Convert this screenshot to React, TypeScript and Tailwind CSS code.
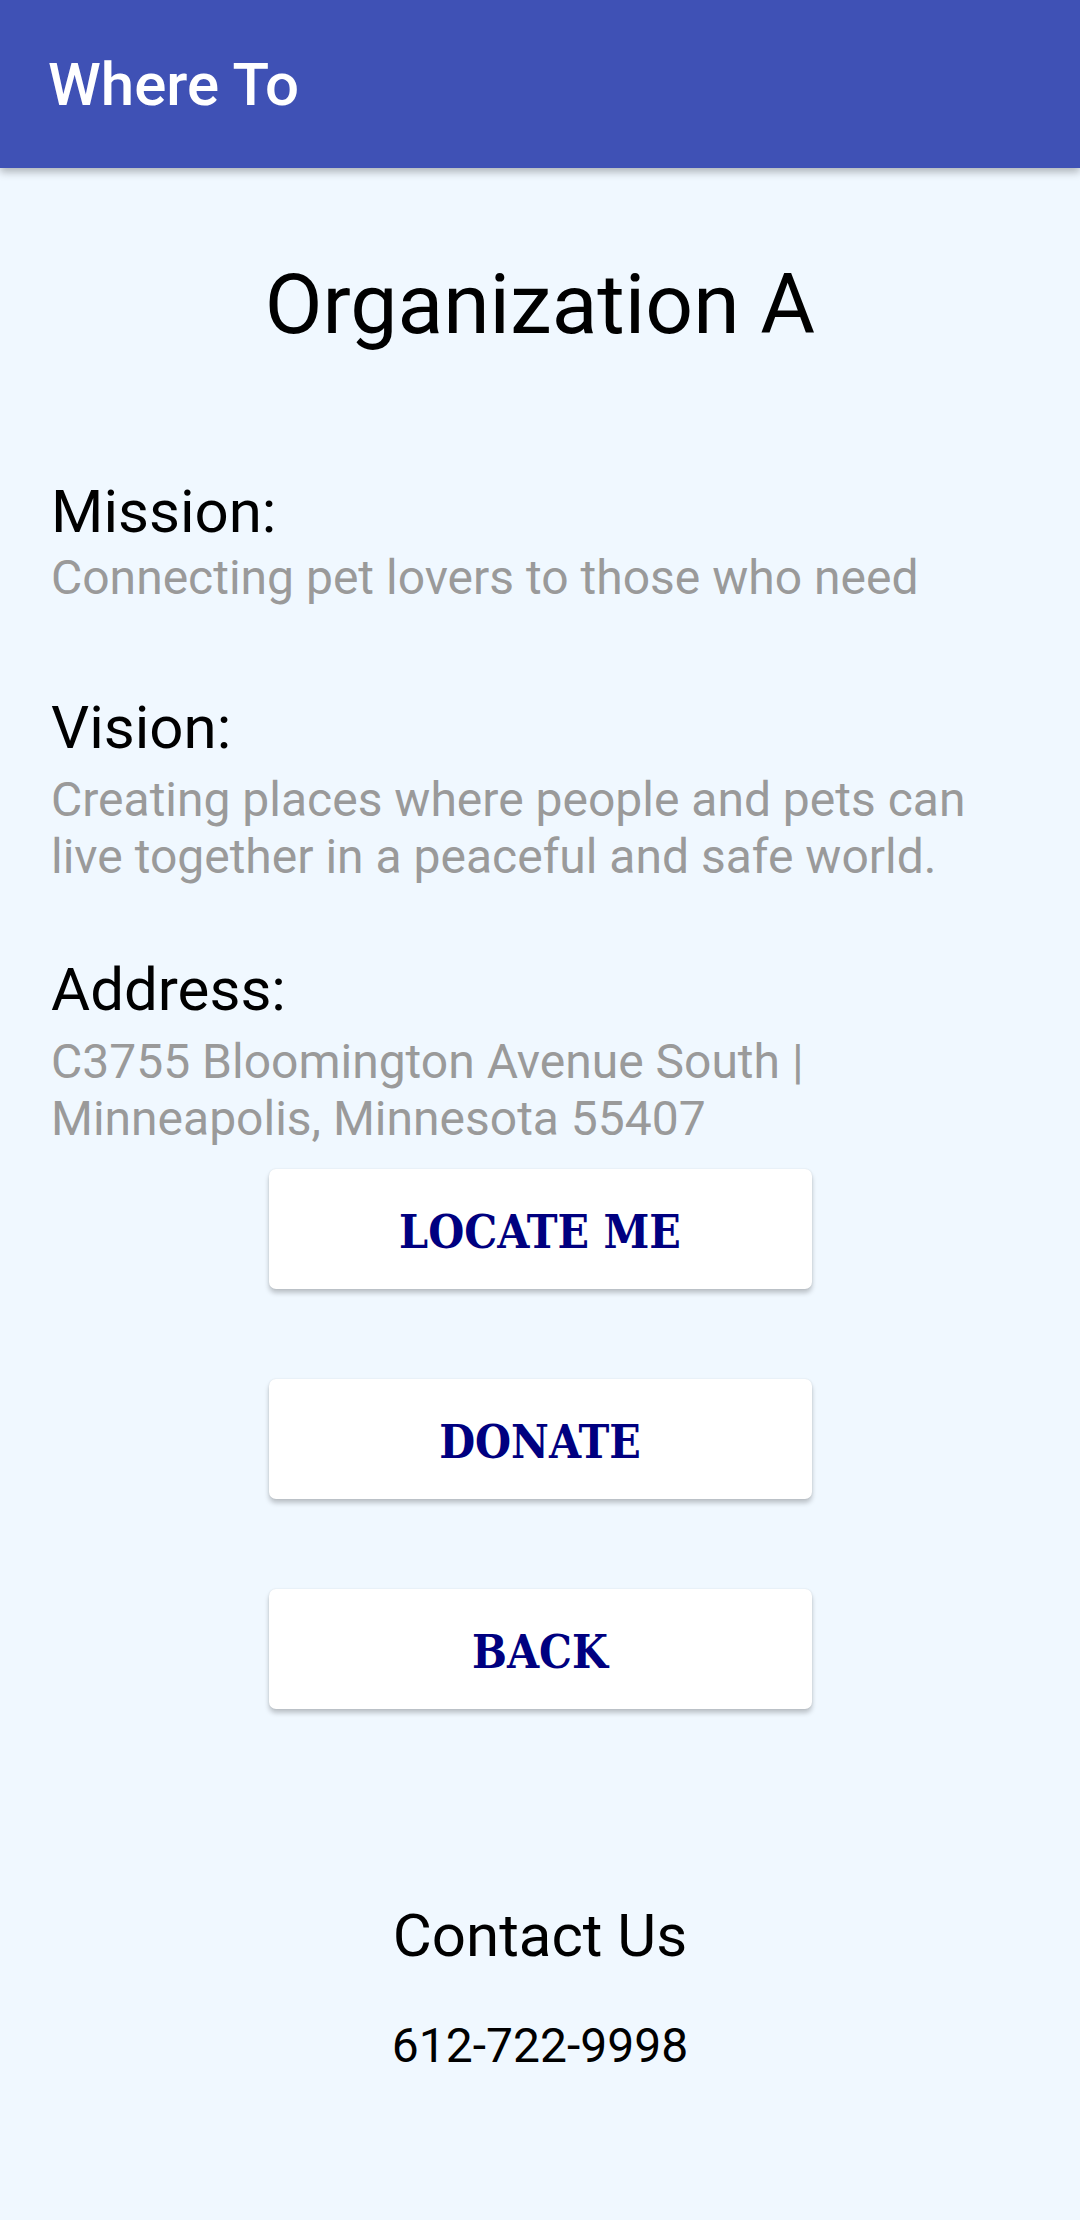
// single screen: organization details
const sections = [
  { label: "Mission:", text: "Connecting pet lovers to those who need", gap: "mt-0.5", top: "mt-[122px]" },
  {
    label: "Vision:",
    text: "Creating places where people and pets can live together in a peaceful and safe world.",
    gap: "mt-2",
    top: "mt-[86px]",
  },
  {
    label: "Address:",
    text: "C3755 Bloomington Avenue South | Minneapolis, Minnesota 55407",
    gap: "mt-2",
    top: "mt-[69px]",
  },
];

const buttons = ["LOCATE ME", "DONATE", "BACK"];

const App = () => {
  return (
    <div className="min-h-[2220px] bg-[#f0f8ff] font-['Roboto',sans-serif] leading-[normal] text-black">
      <header className="relative z-10 h-[168px] bg-[#3f51b5] flex items-center px-12 shadow-[0_4px_8px_rgba(0,0,0,0.28)]">
        <h1 className="text-white text-[60px] font-medium">Where To</h1>
      </header>

      <div className="flex flex-col">
        <h2 className="mt-[87px] text-center text-[84px]">Organization A</h2>

        {sections.map((s) => (
          <div key={s.label} className={`${s.top} pl-[51px] pr-12`}>
            <div className="text-[60px]">{s.label}</div>
            <p className={`${s.gap} text-[48px] text-[#9a9a9a] pr-6`}>{s.text}</p>
          </div>
        ))}

        <div className="mt-[22px] flex flex-col items-center gap-[90px]">
          {buttons.map((b) => (
            <button
              key={b}
              className="w-[543px] h-[120px] pt-[6px] bg-white rounded-[7px] shadow-[0_4px_5px_rgba(0,0,0,0.22),0_0_2px_rgba(0,0,0,0.1)] text-[#000080] text-[46px] font-bold font-stretch-condensed font-['DejaVu_Serif',serif]"
            >
              {b}
            </button>
          ))}
        </div>

        <div className="mt-[191px] flex flex-col items-center">
          <div className="text-[60px]">Contact Us</div>
          <div className="mt-[46px] text-[48px]">612-722-9998</div>
        </div>
      </div>
    </div>
  );
};

export default App;
